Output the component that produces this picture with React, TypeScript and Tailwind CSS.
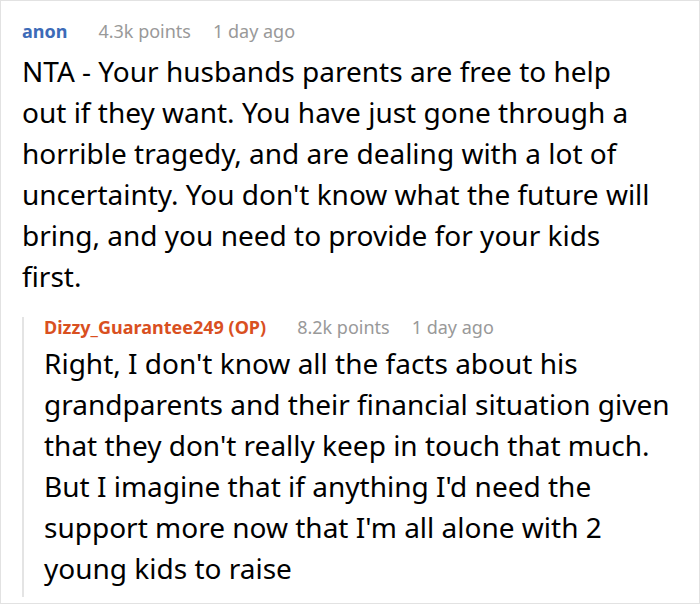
import React from 'react'

const Meta = ({ name, points, time, color, className = '' }: any) => (
    <div className={`flex items-baseline text-[18px] leading-[20px] ${className}`}>
        <span className={`font-bold mr-[31px] ${color}`}>{name}</span>
        <span className="text-[#999999] mr-[22px]">{points}</span>
        <span className="text-[#999999]">{time}</span>
    </div>
);

const App = () => {
    return (
        <div className="w-[700px] h-[604px] bg-white border border-[#e2e2e2] font-['Noto_Sans',sans-serif] text-black overflow-hidden">
            <div className="pl-[21px] pr-[18px] pt-[20px]">
                <Meta name="anon" points="4.3k points" time="1 day ago" color="text-[#3d6bb8]" />
                <p className="text-[28px] leading-[41px] mt-[10px] mr-[26px]">
                    NTA - Your husbands parents are free to help out if they want. You have just gone through a horrible tragedy, and are dealing with a lot of uncertainty. You don't know what the future will bring, and you need to provide for your kids first.
                </p>
                <div className="mt-[27px] border-l-2 border-[#e4e4e4] pl-[20px] pb-[8px]">
                    <Meta name="Dizzy_Guarantee249 (OP)" points="8.2k points" time="1 day ago" color="text-[#d9501f]" className="-mt-[7px]" />
                    <p className="text-[28px] leading-[41px] mt-[6px]">
                        Right, I don't know all the facts about his grandparents and their financial situation given that they don't really keep in touch that much. But I imagine that if anything I'd need the support more now that I'm all alone with 2 young kids to raise
                    </p>
                </div>
            </div>
        </div>
    );
};

export default App
